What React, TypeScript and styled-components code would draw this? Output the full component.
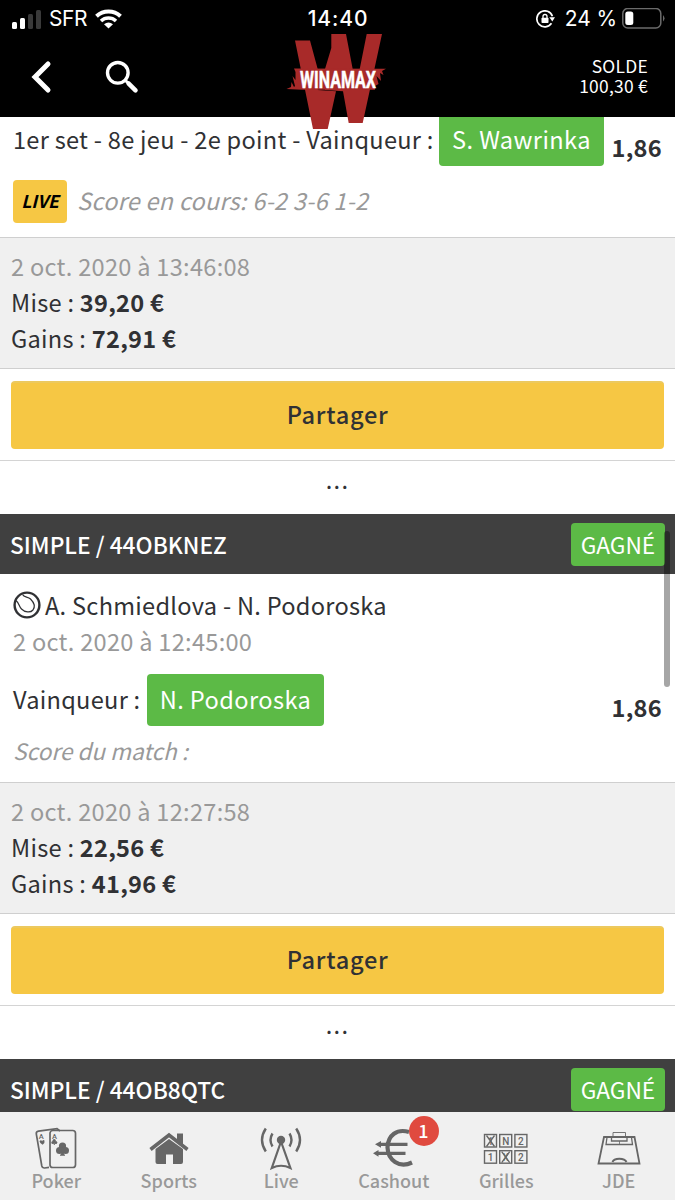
import React from "react";
import styled, { createGlobalStyle } from "styled-components";

const GlobalStyle = createGlobalStyle`
  * { box-sizing: border-box; }
  body { margin: 0; background: #fff; }
`;

const Screen = styled.div`
  width: 675px;
  height: 1200px;
  display: flex;
  flex-direction: column;
  overflow: hidden;
  position: relative;
  background: #fff;
  color: #303134;
  font-family: "Noto Sans CJK SC", "Noto Sans", sans-serif;
  font-size: 23.6px;
  line-height: 36px;
  letter-spacing: 0.27px;
  white-space: nowrap;
`;

/* ---------- status bar and header ---------- */

const StatusBar = styled.div`
  height: 37px;
  flex: none;
  background: #000;
  color: #fff;
  display: grid;
  grid-template-columns: 1fr auto 1fr;
  align-items: center;
  padding: 0 10px 0 12px;
  font-family: Inter, sans-serif;
  font-size: 21px;
  line-height: 37px;
`;

const StatusLeft = styled.div`
  display: flex;
  align-items: center;
  gap: 8px;
`;

const StatusRight = styled.div`
  display: flex;
  align-items: center;
  justify-content: flex-end;
`;

const Carrier = styled.span`
  margin-left: -1px;
  letter-spacing: -0.4px;
`;

const Clock = styled.span`
  font-weight: 500;
  letter-spacing: 0.9px;
  padding-right: 1px;
`;

const BatteryText = styled.span`
  margin: 0 5px 0 9px;
  letter-spacing: -0.1px;
`;

const Header = styled.header`
  height: 80px;
  flex: none;
  background: #000;
  color: #fff;
  display: flex;
  padding: 0 27px 0 30px;
`;

const HeaderIcons = styled.div`
  display: flex;
  gap: 53px;
  padding-top: 23px;
  flex: 1;
`;

const Balance = styled.div`
  padding-top: 19px;
  text-align: right;
  font-size: 17.4px;
  line-height: 20px;
`;

const Logo = styled.svg`
  position: absolute;
  left: 285px;
  top: 30px;
  z-index: 2;
`;

/* ---------- tickets ---------- */

const Content = styled.main`
  flex: 1;
  min-height: 0;
  overflow: hidden;
`;

const TicketHeader = styled.div`
  height: 60px;
  background: #404040;
  color: #fff;
  display: flex;
  align-items: center;
  justify-content: space-between;
  padding: 0 10px;
  font-size: 22.7px;
  letter-spacing: 0;
`;

const TicketId = styled.span`
  font-weight: 500;
  padding-top: 1px;
`;

const Status = styled.span`
  width: 94px;
  height: 43px;
  border-radius: 4px;
  background: #5cba46;
  text-align: center;
  line-height: 43px;
`;

const TicketBody = styled.div<{ $scrolled?: boolean }>`
  display: flex;
  flex-direction: column;
  height: ${(p) => (p.$scrolled ? 123 : 208)}px;
  margin-top: ${(p) => (p.$scrolled ? -3 : 0)}px;
  padding: ${(p) => (p.$scrolled ? 0 : 13)}px 13px 0;
`;

const MatchTitle = styled.div`
  display: flex;
  align-items: center;
  gap: 4px;
`;

const Muted = styled.div`
  color: #999;
`;

const BetRow = styled.div<{ $gap: number }>`
  display: flex;
  align-items: center;
  height: 52px;
  margin-top: ${(p) => p.$gap}px;
  flex: none;
`;

const Market = styled.span`
  padding-bottom: 3px;
`;

const Pick = styled.span<{ $width: number }>`
  width: ${(p) => p.$width}px;
  height: 52px;
  margin-left: auto;
  border-radius: 4px;
  background: #5cba46;
  color: #fff;
  text-align: center;
  line-height: 51px;
  letter-spacing: 0.4px;
`;

const PickGroup = styled.span<{ $width: number }>`
  display: flex;
  align-items: center;
  width: ${(p) => p.$width}px;
  flex: none;
`;

const Odds = styled.span`
  margin-left: auto;
  font-weight: 700;
  padding-top: 14px;
`;

const ScoreRow = styled.div<{ $gap: number; $size: number }>`
  display: flex;
  align-items: center;
  height: 43px;
  margin-top: ${(p) => p.$gap}px;
  color: #999;
  font-size: ${(p) => p.$size}px;
  font-style: italic;
  letter-spacing: ${(p) => (p.$size > 23 ? 0.3 : 0)}px;
  padding-bottom: 1px;
`;

const LiveBadge = styled.span`
  width: 54px;
  height: 43px;
  margin: 2px 10px 0 0;
  border-radius: 4px;
  background: #f6c744;
  color: #000;
  font-size: 17.5px;
  font-weight: 700;
  line-height: 42px;
  letter-spacing: 0;
  text-align: center;
`;

const Summary = styled.div`
  height: 132px;
  background: #f0f0f0;
  border-top: 1px solid #cfcfcf;
  border-bottom: 1px solid #cfcfcf;
  padding: 10px 11px 0;
`;

const ShareArea = styled.div`
  height: 92px;
  border-bottom: 1px solid #d4d4d4;
  padding: 12px 11px 0;
`;

const ShareButton = styled.button`
  display: block;
  width: 653px;
  height: 68px;
  border: 0;
  border-top: 2px solid #ecc95f;
  border-radius: 4px;
  background: #f6c744;
  color: #303134;
  font: inherit;
  font-weight: 500;
  letter-spacing: 0.7px;
  padding: 0 0 4px;
`;

const More = styled.div`
  height: 53px;
  line-height: 37px;
  letter-spacing: 1.2px;
  text-align: center;
`;

const ScrollThumb = styled.div`
  position: absolute;
  left: 664px;
  top: 531px;
  width: 6px;
  height: 156px;
  border-radius: 3px;
  background: rgba(0, 0, 0, 0.35);
`;

/* ---------- tab bar ---------- */

const TabBar = styled.nav`
  height: 88px;
  flex: none;
  background: #f0f0f0;
  display: grid;
  grid-template-columns: repeat(6, 1fr);
`;

const Tab = styled.div`
  position: relative;
  display: flex;
  flex-direction: column;
  align-items: center;
  padding-top: 14px;
  color: #999;
  font-size: 18px;
  font-weight: 500;
  line-height: 24px;
  letter-spacing: 0;
`;

const TabIcon = styled.svg`
  display: block;
  width: 48px;
  height: 44px;
  margin-bottom: -2px;
  fill: none;
  stroke: #666;
  stroke-width: 1.6;
`;

const Badge = styled.span`
  position: absolute;
  left: 71px;
  top: 4px;
  width: 30px;
  height: 30px;
  border-radius: 50%;
  background: #e04a3f;
  color: #fff;
  font-size: 18px;
  line-height: 29px;
  text-align: center;
`;

const SignalIcon = () => (
  <svg width="30" height="20" viewBox="0 0 30 20">
    <rect x="0" y="13" width="5" height="7" rx="1.5" fill="#fff" />
    <rect x="8" y="9" width="5" height="11" rx="1.5" fill="#fff" />
    <rect x="16" y="5" width="5" height="15" rx="1.5" fill="#3a3a3a" />
    <rect x="24" y="1" width="5" height="19" rx="1.5" fill="#3a3a3a" />
  </svg>
);

const WifiIcon = () => (
  <svg width="27" height="20" viewBox="0 0 27 20" fill="none" stroke="#fff">
    <path d="M1.500 7.200A17.500 17.500 0 0 1 25.500 7.200" strokeWidth="4" />
    <path d="M6 12A11 11 0 0 1 21 12" strokeWidth="3.500" />
    <path d="M13.500 19.500L9 15.200Q13.500 11.600 18 15.200Z" fill="#fff" stroke="none" />
  </svg>
);

const LockIcon = () => (
  <svg width="20" height="18" viewBox="0 0 20 18" fill="none">
    <path d="M16.400 6.200A8 8 0 1 0 15.500 13.300" stroke="#fff" strokeWidth="1.700" />
    <path d="M13.300 7.300H19L16.300 11.500Z" fill="#fff" />
    <rect x="5.500" y="7.800" width="7" height="5.200" rx="0.800" fill="#fff" />
    <path d="M7 8V6.500a2 2 0 0 1 4 0V8" stroke="#fff" strokeWidth="1.300" />
  </svg>
);

const BatteryIcon = () => (
  <svg width="43" height="22" viewBox="0 0 43 22">
    <rect x="0.800" y="0.500" width="38" height="19.500" rx="5" fill="none" stroke="#6b6b6b" strokeWidth="1.500" />
    <rect x="3.300" y="3.500" width="8" height="13.500" rx="2.500" fill="#fff" />
    <path d="M41 7Q44 10.250 41 13.500Z" fill="#6b6b6b" />
  </svg>
);

const BackIcon = () => (
  <svg width="22" height="34" viewBox="0 0 22 34" fill="none" stroke="#fff" strokeWidth="5">
    <path d="M18 4L5 17L18 30" strokeLinecap="round" />
  </svg>
);

const SearchIcon = () => (
  <svg width="34" height="34" viewBox="0 0 34 34" fill="none" stroke="#fff">
    <circle cx="12.800" cy="12.800" r="10.300" strokeWidth="3.400" />
    <path d="M20.500 20.500L22.500 22.500" strokeWidth="3" />
    <path d="M23.500 23.300L30.500 30.300" strokeWidth="4.500" strokeLinecap="round" />
  </svg>
);

const WinamaxLogo = () => (
  <Logo width="104" height="102" viewBox="0 0 104 102">
    <g fill="#a82a29">
      <path d="M10 10.500H25L32.700 39V60L51 61.300L42.700 99H28Z" />
      <path d="M40 39L46.300 18V4H61L67.700 39H74.700L81.700 4H97L77.700 93H63.700L58 61.300L40 60Z" />
      <path d="M9 38.500L101 38.700L97 41L98.500 45L95 43L96 51L91.500 46L93.500 54L90 56V59.700H17L1.500 59L6 57L6.500 52L9 57L10 56L7.500 46L10.500 50V42Z" />
    </g>
    <text
      x="15"
      y="57.800"
      textLength="76"
      lengthAdjust="spacingAndGlyphs"
      fill="#fff"
      stroke="#fff"
      strokeWidth="0.500"
      fontFamily="Roboto, sans-serif"
      fontWeight="700"
      fontSize="24.500"
      letterSpacing="0"
    >
      WINAMAX
    </text>
  </Logo>
);

const TennisIcon = () => (
  <svg width="28" height="28" viewBox="0 0 28 28" fill="none" stroke="#303134">
    <circle cx="14" cy="14" r="12.400" strokeWidth="2.400" />
    <path
      d="M9.500 3.500C11 6.500 15 5.500 17.500 8C20.500 11 22.500 15.500 20 19C17.500 22 12 21.500 8.500 18C6 15.500 6.500 12.500 3 9.500"
      strokeWidth="1.200"
    />
  </svg>
);

const PokerIcon = () => (
  <TabIcon viewBox="0 0 48 44">
    <path d="M28 5L25 2.600L6.500 5.200Q4 5.500 4.300 8L9.800 40Q10.300 42.200 12.500 42L17 41.400" strokeWidth="1.700" />
    <rect x="18" y="4.500" width="25.500" height="37" rx="2.800" strokeWidth="1.700" />
    <g fill="#666" stroke="none">
      <circle cx="30.500" cy="20" r="3.600" />
      <circle cx="27.500" cy="24.500" r="3.500" />
      <circle cx="33.500" cy="24.500" r="3.500" />
      <path d="M29.800 22h1.600l0.600 6.500h1v1.300h-5v-1.300h1z" />
      <circle cx="22.200" cy="14.500" r="1.600" />
      <circle cx="20.800" cy="16.500" r="1.500" />
      <circle cx="23.800" cy="16.500" r="1.500" />
      <rect x="21.800" y="15" width="1" height="4" />
      <path d="M7.500 15.200Q9 13.500 10.200 15.200Q11 13 12.500 14.500Q13.200 17 10.600 18.800Q8 17.500 7.500 15.200Z" />
      <text x="20" y="12.500" fontSize="7.500" fontFamily="Roboto, sans-serif">A</text>
      <text x="6.800" y="13" fontSize="7.500" fontFamily="Roboto, sans-serif">A</text>
    </g>
  </TabIcon>
);

const HomeIcon = () => (
  <TabIcon viewBox="0 0 48 44">
    <path d="M5.500 23.500L24 9L42.500 23.500" strokeWidth="3.600" />
    <path d="M32 7.500H38V19L32 14.500Z" fill="#666" stroke="none" />
    <path d="M10.500 23L24 13L38 23V36Q38 38 36 38H28V28.500H21V38H12.500Q10.500 38 10.500 36Z" fill="#666" stroke="none" />
  </TabIcon>
);

const LiveIcon = () => (
  <TabIcon viewBox="0 0 48 44">
    <circle cx="24" cy="14" r="4.200" fill="#666" stroke="none" />
    <path d="M23.500 17L14.800 42Q24 37.500 33.400 42L24.500 17" strokeWidth="2.200" />
    <path d="M15.500 7.500Q11.500 14 15.500 20.500M32.500 7.500Q36.500 14 32.500 20.500" strokeWidth="2.400" />
    <path d="M8.800 2.500Q1.200 14 8.800 25.500M39.200 2.500Q46.800 14 39.200 25.500" strokeWidth="2.400" />
  </TabIcon>
);

const EuroIcon = () => (
  <TabIcon viewBox="0 0 48 44">
    <path d="M39 6C27 2.500 18 9 17.500 21.500C18 34 29 42.500 42 36.500" strokeWidth="4.200" />
    <path d="M9 18.300H37.500M6.500 27.300H35.500" strokeWidth="3.200" />
    <path d="M11 15L5 18.300L11 21.700ZM8.500 24L3 27.300L8.500 30.700Z" fill="#666" stroke="none" />
  </TabIcon>
);

const gridCells = [
  ["1", "N", "2"],
  ["1", "X", "2"],
];

const GridIcon = () => (
  <TabIcon viewBox="0 0 48 44">
    {gridCells.map((row, r) =>
      row.map((label, c) => (
        <g key={`${r}-${c}`} transform={`translate(${2.5 + c * 15.2} ${8.5 + r * 16.2})`}>
          <rect width="12" height="12.500" strokeWidth="1.400" />
          <text
            x="6"
            y="10"
            textAnchor="middle"
            fill="#666"
            stroke="none"
            fontFamily="Roboto, sans-serif"
            fontWeight="500"
            fontSize="10"
          >
            {label}
          </text>
          {r === c && <path d="M2 1L10 12M10 1L2 12" strokeWidth="1.300" />}
        </g>
      ))
    )}
  </TabIcon>
);

const PitchIcon = () => (
  <TabIcon viewBox="0 0 48 44">
    <path d="M9 11H39.500L44.500 37.500H3.500Z" strokeWidth="1.800" />
    <path d="M12 11.500L11 18.500H37.500L36.500 11.500M16.500 11.500V15H32V11.500" strokeWidth="1.300" />
    <path d="M18 11V6.500H30.500V11" strokeWidth="0.900" />
    <path d="M17.500 36C19 31.500 29.500 31.500 31.500 36" strokeWidth="2" />
    <path d="M24.500 15V18" strokeWidth="0.800" />
  </TabIcon>
);

type DetailsProps = { date: string; stake: string; gain: string };

const TicketDetails = ({ date, stake, gain }: DetailsProps) => (
  <>
    <Summary>
      <Muted>{date}</Muted>
      <div>
        Mise : <b>{stake}</b>
      </div>
      <div>
        Gains : <b>{gain}</b>
      </div>
    </Summary>
    <ShareArea>
      <ShareButton>Partager</ShareButton>
    </ShareArea>
    <More>...</More>
  </>
);

const TicketTop = ({ id }: { id: string }) => (
  <TicketHeader>
    <TicketId>SIMPLE / {id}</TicketId>
    <Status>GAGNÉ</Status>
  </TicketHeader>
);

const tabs = [
  { label: "Poker", Icon: PokerIcon },
  { label: "Sports", Icon: HomeIcon },
  { label: "Live", Icon: LiveIcon },
  { label: "Cashout", Icon: EuroIcon, badge: 1 },
  { label: "Grilles", Icon: GridIcon },
  { label: "JDE", Icon: PitchIcon },
];

export default function App() {
  return (
    <>
      <GlobalStyle />
      <Screen>
        <StatusBar>
          <StatusLeft>
            <SignalIcon />
            <Carrier>SFR</Carrier>
            <WifiIcon />
          </StatusLeft>
          <Clock>14:40</Clock>
          <StatusRight>
            <LockIcon />
            <BatteryText>24 %</BatteryText>
            <BatteryIcon />
          </StatusRight>
        </StatusBar>
        <Header>
          <HeaderIcons>
            <BackIcon />
            <SearchIcon />
          </HeaderIcons>
          <Balance>
            <div>SOLDE</div>
            <div>100,30 €</div>
          </Balance>
        </Header>
        <WinamaxLogo />

        <Content>
          <TicketBody $scrolled>
            <BetRow $gap={0}>
              <PickGroup $width={591}>
                <Market>1er set - 8e jeu - 2e point - Vainqueur :</Market>
                <Pick $width={165}>S. Wawrinka</Pick>
              </PickGroup>
              <Odds>1,86</Odds>
            </BetRow>
            <ScoreRow $gap={13} $size={23.4}>
              <LiveBadge>LIVE</LiveBadge>
              Score en cours: 6-2 3-6 1-2
            </ScoreRow>
          </TicketBody>
          <TicketDetails date="2 oct. 2020 à 13:46:08" stake="39,20 €" gain="72,91 €" />

          <TicketTop id="44OBKNEZ" />
          <TicketBody>
            <MatchTitle>
              <TennisIcon />
              <span>A. Schmiedlova - N. Podoroska</span>
            </MatchTitle>
            <Muted>2 oct. 2020 à 12:45:00</Muted>
            <BetRow $gap={15}>
              <PickGroup $width={311}>
                <Market>Vainqueur :</Market>
                <Pick $width={177}>N. Podoroska</Pick>
              </PickGroup>
              <Odds>1,86</Odds>
            </BetRow>
            <ScoreRow $gap={4} $size={22.6}>
              Score du match :
            </ScoreRow>
          </TicketBody>
          <TicketDetails date="2 oct. 2020 à 12:27:58" stake="22,56 €" gain="41,96 €" />

          <TicketTop id="44OB8QTC" />
        </Content>
        <ScrollThumb />

        <TabBar>
          {tabs.map(({ label, Icon, badge }) => (
            <Tab key={label}>
              <Icon />
              {label}
              {badge && <Badge>{badge}</Badge>}
            </Tab>
          ))}
        </TabBar>
      </Screen>
    </>
  );
}
